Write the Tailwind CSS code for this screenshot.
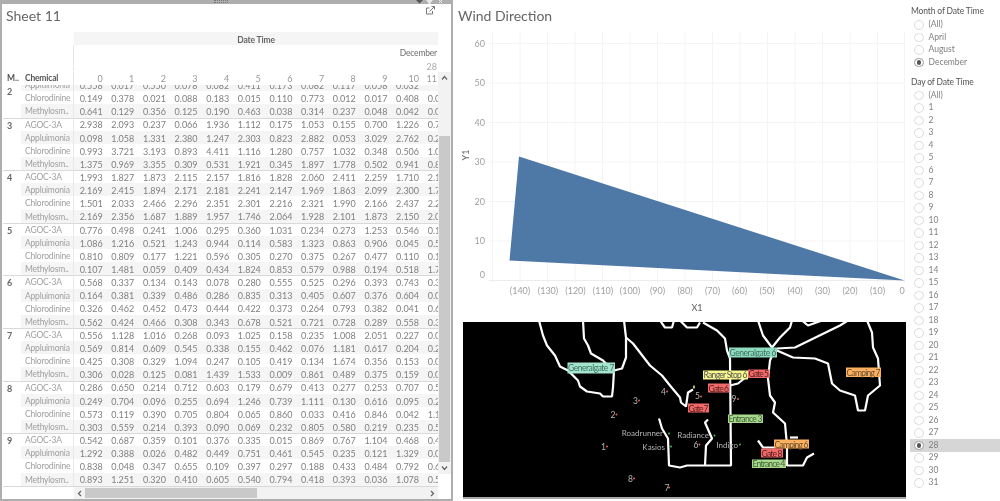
<!DOCTYPE html>
<html>
<head>
<meta charset="utf-8">
<script src="https://cdn.jsdelivr.net/npm/@tailwindcss/browser@4"></script>
</head>
<body class="bg-white overflow-hidden">
<div class="flex w-[1000px] h-[501px] overflow-hidden font-[Lato,sans-serif] text-[9px] text-[#808080] bg-white blur-[0.4px]">

  <!-- Left worksheet -->
  <section class="relative box-border w-[453px] h-[501px] shrink-0 border-t-[4px] border-l-[2px] border-r-[2px] border-b-[2px] border-[#aeaeae] flex flex-col">
    <div class="absolute -top-[4px] left-[212px] w-[14px] h-[3px] border-y border-dotted border-[#777]"></div>
    <svg class="absolute -top-[4px] left-[412px]" width="34" height="4" viewBox="0 0 34 4"><path d="M2 0h7l-3.5 3.5z" fill="#555"/><path d="M12 0h7l-2.5 3v1h-2v-1z" fill="#e8e8e8"/><path d="M25 0l3 3M28 0l-3 3" stroke="#eee"/></svg>
    <div class="flex justify-between h-[28px] shrink-0">
      <h1 class="pl-1 text-[14px] leading-[24px] text-[#666] font-normal">Sheet 11</h1>
      <svg class="mt-[2px] mr-[16px]" width="9" height="9" viewBox="0 0 9 9" fill="none" stroke="#777"><path d="M6.5 5v3h-6V2h3"/><path d="M3.5 5.5L8 1M5.5 .5h3v3"/></svg>
    </div>

    <div class="flex flex-1 min-h-0">
      <div class="w-[436px] shrink-0 flex flex-col">
        <!-- header -->
        <div class="ml-[72px] h-[13px] bg-[#f5f5f5] text-center pt-[2px] leading-[13px] text-[8.5px] tracking-[-0.15px] font-bold text-[#666]">Date Time</div>
        <div class="ml-[71px] h-[13px] pt-[2px] text-right leading-[13px] pr-[1px] text-[8.5px] tracking-[-0.2px] font-medium text-[#777] border-l border-[#e6e6e6]">December</div>
        <div class="ml-[71px] h-[13px] pt-[2px] text-right leading-[13px] pr-[1px] text-[#aaa] border-l border-[#e6e6e6]">28</div>
        <div class="flex h-[13.5px] pt-[2px] items-center text-[#999] [&>span]:w-[31.65px] [&>span]:shrink-0 [&>span]:text-right [&>span]:pr-[3px] overflow-hidden">
          <b class="w-[19px] pl-[5px] text-[#555] text-[8.5px] shrink-0">M..</b>
          <b class="w-[53px] pl-[4px] text-[#555] text-[8.5px] tracking-[-0.2px] shrink-0 border-r border-[#e4e4e4]">Chemical</b>
          <span>0</span><span>1</span><span>2</span><span>3</span><span>4</span><span>5</span><span>6</span><span>7</span><span>8</span><span>9</span><span>10</span><span class="!w-[16px] !pr-[1px]">11</span>
        </div>
        <!-- body -->
        <div class="h-[402.5px] overflow-hidden shrink-0 [&>div]:flex [&>div]:h-[52.6px] [&>div]:ml-px [&>div]:shadow-[0_1px_0_#d9d9d9] [&_h2]:w-[18px] [&_h2]:shrink-0 [&_h2]:pl-[4px] [&_h2]:pt-[2px] [&_h2]:font-bold [&_h2]:text-[#666] [&_h2]:leading-[12px] [&_p]:flex [&_p]:h-[13.15px] [&_p]:items-center [&_p]:whitespace-nowrap [&_p:nth-child(even)]:bg-[#f5f5f5] [&_b]:w-[53px] [&_b]:h-full [&_b]:shrink-0 [&_b]:pl-[4px] [&_b]:font-normal [&_b]:text-[8.5px] [&_b]:tracking-[-0.2px] [&_b]:text-[#a0a0a0] [&_b]:leading-[15.5px] [&_b]:border-r [&_b]:border-[#e8e8e8] [&_span]:w-[31.65px] [&_span]:shrink-0 [&_span]:text-right [&_span]:pr-[3px] [&_span]:pt-[2px]">
          <div class="-mt-[19.5px]"><h2 class="!pt-[21px]">2</h2><section class="w-[418px] overflow-hidden">
            <p><b></b></p>
            <p><b>Appluimonia</b><span>0.558</span><span>0.017</span><span>0.550</span><span>0.078</span><span>0.082</span><span>0.411</span><span>0.173</span><span>0.082</span><span>0.117</span><span>0.058</span><span>0.032</span><span>0.1</span></p>
            <p><b>Chlorodinine</b><span>0.149</span><span>0.378</span><span>0.021</span><span>0.088</span><span>0.183</span><span>0.015</span><span>0.110</span><span>0.773</span><span>0.012</span><span>0.017</span><span>0.408</span><span>0.011</span></p>
            <p><b>Methylosm..</b><span>0.641</span><span>0.129</span><span>0.356</span><span>0.125</span><span>0.190</span><span>0.463</span><span>0.038</span><span>0.314</span><span>0.237</span><span>0.048</span><span>0.042</span><span>0.011</span></p>
          </section></div>
          <div><h2>3</h2><section class="w-[418px] overflow-hidden">
            <p><b>AGOC-3A</b><span>2.938</span><span>2.093</span><span>0.237</span><span>0.066</span><span>1.936</span><span>1.112</span><span>0.175</span><span>1.053</span><span>0.155</span><span>0.700</span><span>1.226</span><span>0.711</span></p>
            <p><b>Appluimonia</b><span>0.098</span><span>1.058</span><span>1.331</span><span>2.380</span><span>1.247</span><span>2.303</span><span>0.823</span><span>2.882</span><span>0.053</span><span>3.029</span><span>2.762</span><span>0.211</span></p>
            <p><b>Chlorodinine</b><span>0.993</span><span>3.721</span><span>3.193</span><span>0.893</span><span>4.411</span><span>1.116</span><span>1.280</span><span>0.757</span><span>1.032</span><span>0.348</span><span>0.506</span><span>1.011</span></p>
            <p><b>Methylosm..</b><span>1.375</span><span>0.969</span><span>3.355</span><span>0.309</span><span>0.531</span><span>1.921</span><span>0.345</span><span>1.897</span><span>1.778</span><span>0.502</span><span>0.941</span><span>0.811</span></p>
          </section></div>
          <div><h2>4</h2><section class="w-[418px] overflow-hidden">
            <p><b>AGOC-3A</b><span>1.993</span><span>1.827</span><span>1.873</span><span>2.115</span><span>2.157</span><span>1.816</span><span>1.828</span><span>2.060</span><span>2.411</span><span>2.259</span><span>1.710</span><span>2.111</span></p>
            <p><b>Appluimonia</b><span>2.169</span><span>2.415</span><span>1.894</span><span>2.171</span><span>2.181</span><span>2.241</span><span>2.147</span><span>1.969</span><span>1.863</span><span>2.099</span><span>2.300</span><span>1.711</span></p>
            <p><b>Chlorodinine</b><span>1.501</span><span>2.033</span><span>2.466</span><span>2.296</span><span>2.351</span><span>2.301</span><span>2.216</span><span>2.321</span><span>1.990</span><span>2.166</span><span>2.437</span><span>2.211</span></p>
            <p><b>Methylosm..</b><span>2.169</span><span>2.356</span><span>1.687</span><span>1.889</span><span>1.957</span><span>1.746</span><span>2.064</span><span>1.928</span><span>2.101</span><span>1.873</span><span>2.150</span><span>2.011</span></p>
          </section></div>
          <div><h2>5</h2><section class="w-[418px] overflow-hidden">
            <p><b>AGOC-3A</b><span>0.776</span><span>0.498</span><span>0.241</span><span>1.006</span><span>0.295</span><span>0.360</span><span>1.031</span><span>0.234</span><span>0.273</span><span>1.253</span><span>0.546</span><span>0.111</span></p>
            <p><b>Appluimonia</b><span>1.086</span><span>1.216</span><span>0.521</span><span>1.243</span><span>0.944</span><span>0.114</span><span>0.583</span><span>1.323</span><span>0.863</span><span>0.906</span><span>0.045</span><span>0.511</span></p>
            <p><b>Chlorodinine</b><span>0.810</span><span>0.809</span><span>0.177</span><span>1.221</span><span>0.596</span><span>0.305</span><span>0.270</span><span>0.375</span><span>0.267</span><span>0.477</span><span>0.110</span><span>0.111</span></p>
            <p><b>Methylosm..</b><span>0.107</span><span>1.481</span><span>0.059</span><span>0.409</span><span>0.434</span><span>1.824</span><span>0.853</span><span>0.579</span><span>0.988</span><span>0.194</span><span>0.518</span><span>1.711</span></p>
          </section></div>
          <div><h2>6</h2><section class="w-[418px] overflow-hidden">
            <p><b>AGOC-3A</b><span>0.568</span><span>0.337</span><span>0.134</span><span>0.143</span><span>0.078</span><span>0.280</span><span>0.555</span><span>0.525</span><span>0.296</span><span>0.393</span><span>0.743</span><span>0.311</span></p>
            <p><b>Appluimonia</b><span>0.164</span><span>0.381</span><span>0.339</span><span>0.486</span><span>0.286</span><span>0.835</span><span>0.313</span><span>0.405</span><span>0.607</span><span>0.376</span><span>0.604</span><span>0.011</span></p>
            <p><b>Chlorodinine</b><span>0.326</span><span>0.462</span><span>0.452</span><span>0.473</span><span>0.444</span><span>0.422</span><span>0.373</span><span>0.264</span><span>0.793</span><span>0.382</span><span>0.041</span><span>0.611</span></p>
            <p><b>Methylosm..</b><span>0.562</span><span>0.424</span><span>0.466</span><span>0.308</span><span>0.343</span><span>0.678</span><span>0.521</span><span>0.721</span><span>0.728</span><span>0.289</span><span>0.558</span><span>0.311</span></p>
          </section></div>
          <div><h2>7</h2><section class="w-[418px] overflow-hidden">
            <p><b>AGOC-3A</b><span>0.556</span><span>1.128</span><span>1.016</span><span>0.268</span><span>0.093</span><span>1.025</span><span>0.158</span><span>0.235</span><span>1.008</span><span>2.051</span><span>0.227</span><span>0.011</span></p>
            <p><b>Appluimonia</b><span>0.569</span><span>0.814</span><span>0.609</span><span>0.545</span><span>0.338</span><span>0.155</span><span>0.462</span><span>0.076</span><span>1.181</span><span>0.617</span><span>0.204</span><span>0.211</span></p>
            <p><b>Chlorodinine</b><span>0.425</span><span>0.308</span><span>0.329</span><span>1.094</span><span>0.247</span><span>0.105</span><span>0.419</span><span>0.134</span><span>1.674</span><span>0.356</span><span>0.153</span><span>0.011</span></p>
            <p><b>Methylosm..</b><span>0.306</span><span>0.028</span><span>0.125</span><span>0.081</span><span>1.439</span><span>1.533</span><span>0.009</span><span>0.861</span><span>0.489</span><span>0.375</span><span>0.159</span><span>0.011</span></p>
          </section></div>
          <div><h2>8</h2><section class="w-[418px] overflow-hidden">
            <p><b>AGOC-3A</b><span>0.286</span><span>0.650</span><span>0.214</span><span>0.712</span><span>0.603</span><span>0.179</span><span>0.679</span><span>0.413</span><span>0.277</span><span>0.253</span><span>0.707</span><span>0.511</span></p>
            <p><b>Appluimonia</b><span>0.249</span><span>0.704</span><span>0.096</span><span>0.255</span><span>0.694</span><span>1.246</span><span>0.739</span><span>1.111</span><span>0.130</span><span>0.616</span><span>0.095</span><span>0.211</span></p>
            <p><b>Chlorodinine</b><span>0.573</span><span>0.119</span><span>0.390</span><span>0.705</span><span>0.804</span><span>0.065</span><span>0.860</span><span>0.033</span><span>0.416</span><span>0.846</span><span>0.042</span><span>1.111</span></p>
            <p><b>Methylosm..</b><span>0.303</span><span>0.559</span><span>0.214</span><span>0.393</span><span>0.090</span><span>0.069</span><span>0.232</span><span>0.805</span><span>0.580</span><span>0.219</span><span>0.235</span><span>0.511</span></p>
          </section></div>
          <div><h2>9</h2><section class="w-[418px] overflow-hidden">
            <p><b>AGOC-3A</b><span>0.542</span><span>0.687</span><span>0.359</span><span>0.101</span><span>0.376</span><span>0.335</span><span>0.015</span><span>0.869</span><span>0.767</span><span>1.104</span><span>0.468</span><span>0.411</span></p>
            <p><b>Appluimonia</b><span>1.292</span><span>0.388</span><span>0.026</span><span>0.482</span><span>0.449</span><span>0.751</span><span>0.461</span><span>0.545</span><span>0.235</span><span>0.121</span><span>1.329</span><span>0.011</span></p>
            <p><b>Chlorodinine</b><span>0.838</span><span>0.048</span><span>0.347</span><span>0.655</span><span>0.109</span><span>0.397</span><span>0.297</span><span>0.188</span><span>0.433</span><span>0.484</span><span>0.792</span><span>0.611</span></p>
            <p><b>Methylosm..</b><span>0.893</span><span>1.251</span><span>0.320</span><span>0.410</span><span>0.605</span><span>0.540</span><span>0.794</span><span>0.418</span><span>0.393</span><span>0.036</span><span>1.078</span><span>0.511</span></p>
          </section></div>
        </div>
      </div>
      <!-- vertical scrollbar -->
      <div class="w-[13px] shrink-0 mt-[39.5px] flex flex-col items-center h-[402.5px] bg-[#f2f2f2]">
        <svg class="my-[3px] shrink-0" width="7" height="6" viewBox="0 0 7 6" fill="none" stroke="#666" stroke-width="1.3"><path d="M1 4.5l2.5-3 2.5 3"/></svg>
        <div class="w-full flex-1 relative"></div>
        <div class="w-[11px] h-[326px] bg-[#c9c9c9]"></div>
        <svg class="my-[3px] shrink-0" width="7" height="6" viewBox="0 0 7 6" fill="none" stroke="#666" stroke-width="1.3"><path d="M1 1.5l2.5 3 2.5-3"/></svg>
      </div>
    </div>
    <!-- horizontal scrollbar -->
    <div class="h-[12px] flex items-center shrink-0 mt-auto">
      <div class="w-[72px] shrink-0"></div>
      <div class="flex items-center w-[364px] h-full bg-[#f2f2f2]">
        <svg class="mx-[3px] shrink-0" width="5" height="7" viewBox="0 0 5 7" fill="none" stroke="#666" stroke-width="1.3"><path d="M4 1L1.500 3.500 4 6"/></svg>
        <div class="w-[172px] h-[10px] bg-[#c9c9c9]"></div>
        <div class="flex-1"></div>
        <svg class="mx-[3px] shrink-0" width="5" height="7" viewBox="0 0 5 7" fill="none" stroke="#666" stroke-width="1.3"><path d="M1 1l2.500 2.500L1 6"/></svg>
      </div>
    </div>
  </section>

  <!-- Middle -->
  <main class="w-[457px] shrink-0 flex flex-col">
    <h1 class="h-[32px] pl-[5px] pt-[6px] text-[14px] leading-[20px] text-[#666] font-normal shrink-0">Wind Direction</h1>
    <svg class="shrink-0" width="457" height="289.500" viewBox="453 32 457 289.500" font-size="9" fill="#a0a0a0" font-family="Lato,sans-serif">
      <g stroke="#f4f4f4" fill="none">
        <path d="M489 43.500H905M489 83H905M489 122.500H905M489 162H905M489 201.500H905M489 241H905"/>
        <path d="M492.500 32V283M520 32V283M547.500 32V283M575 32V283M602.500 32V283M630 32V283M657.500 32V283M685 32V283M712.500 32V283M740 32V283M767.500 32V283M795 32V283M822.500 32V283M850 32V283M877.500 32V283M904.500 32V283"/>
        <path d="M489 280.500H905" stroke="#ececec"/>
      </g>
      <polygon points="519,156.500 509.500,260.500 904.500,280.500" fill="#4e79a7"/>
      <g text-anchor="end">
        <text x="485" y="46.500">60</text><text x="485" y="86">50</text><text x="485" y="125.500">40</text><text x="485" y="165">30</text><text x="485" y="204.500">20</text><text x="485" y="244">10</text><text x="485" y="278">0</text>
      </g>
      <g text-anchor="middle">
        <text x="520" y="294">(140)</text><text x="548" y="294">(130)</text><text x="575.500" y="294">(120)</text><text x="603" y="294">(110)</text><text x="630" y="294">(100)</text><text x="657.500" y="294">(90)</text><text x="685" y="294">(80)</text><text x="712.500" y="294">(70)</text><text x="739.500" y="294">(60)</text><text x="767" y="294">(50)</text><text x="795" y="294">(40)</text><text x="822.500" y="294">(30)</text><text x="850" y="294">(20)</text><text x="877.500" y="294">(10)</text><text x="902" y="294">0</text>
        <text x="697" y="310.500" fill="#666" font-weight="500">X1</text>
        <text transform="translate(469,155) rotate(-90)" fill="#666" font-weight="500">Y1</text>
      </g>
    </svg>
    <svg class="ml-[10px] shrink-0" width="443" height="175" viewBox="463 321.500 443 175" font-family="Lato,sans-serif" font-size="8.500">
      <rect x="463" y="321.500" width="443" height="175" fill="#000"/>
      <g fill="none" stroke="#fff" stroke-width="2.200" stroke-linejoin="bevel">
        <path d="M539 320L543 335L547 345L555 355L560 366L568 370L578 380L580 386L587 391L600 393L603 396L612 396L613 387L614 370L622 368L626 357L626 337L624 320"/>
        <path d="M583 320L584 338L588 345L591 353L603 360L608 365L614 370"/>
        <path d="M626 337L633 343L650 365L662 375L670 385L680 397L681 402L686 406L688 392L693 389"/>
        <path d="M660 320L665 327L672 327L674 320"/>
        <path d="M680 320L687 327L697 327L700 322"/>
        <path d="M703 322L717 330L725 338L727 350L730 358L731 465L705 465L687 465L680 467L669 465L668 438L662 428L659 418"/>
        <path d="M705 465L706 445L712 438L705 422L708 419"/>
        <path d="M758 320L763 335L772 347L780 337L790 327L792 320"/>
        <path d="M775 348L770 360L768 378L770 395L775 402L773 412L785 423L787 445L787 465L803 465L807 457L814 453"/>
        <path d="M777 350L793 357L815 358L828 363L832 383L840 390L855 395L858 410L865 410L868 395L880 385L878 358L873 347L872 332L867 320"/>
        <path d="M777 348L795 347L840 325L848 320"/>
        <path d="M802 320L808 325L822 320"/>
        <path d="M730 385L738 383L748 375"/>
        <path d="M758 440L763 447L775 447"/>
        <path d="M790 437L798 437"/>
      </g>
      <path d="M694 385v3" stroke="#f5f586" stroke-width="1.500"/>
      <g>
        <rect x="567.500" y="362" width="47.500" height="11" fill="#a3e6cd"/><text x="568" y="370.500" fill="#3f6f60" textLength="46.500">Generalgate 7</text>
        <rect x="729" y="347" width="48" height="10" fill="#8fdcc0"/><text x="729.500" y="355" fill="#3f6f60" textLength="47">Generalgate 6</text>
        <rect x="703" y="370" width="45" height="9" fill="#f7f78e"/><text x="703.500" y="377.700" fill="#555" textLength="44">Ranger Stop 6</text>
        <rect x="748" y="369" width="21.500" height="8.500" fill="#f26a6a"/><text x="748.500" y="376.500" fill="#5a2020" textLength="20.500">Gate 5</text>
        <rect x="708" y="383" width="21.500" height="9" fill="#f26a6a"/><text x="708.500" y="391" fill="#5a2020" textLength="20.500">Gate 6</text>
        <rect x="688" y="403" width="21" height="9" fill="#f26a6a"/><text x="688.500" y="411" fill="#5a2020" textLength="20">Gate 7</text>
        <rect x="846" y="367" width="35" height="9.500" fill="#fdb060"/><text x="846.500" y="375" fill="#66502f" textLength="34">Camping 7</text>
        <rect x="728" y="414" width="35" height="8.500" fill="#a9d98f"/><text x="728.500" y="421.500" fill="#3f6030" textLength="34">Entrance 3</text>
        <rect x="774" y="439" width="35" height="9" fill="#fdb060"/><text x="774.500" y="447" fill="#66502f" textLength="34">Camping 6</text>
        <rect x="761" y="448" width="22" height="9" fill="#f26a6a"/><text x="761.500" y="456" fill="#5a2020" textLength="21">Gate 8</text>
        <rect x="752" y="459" width="34" height="8.500" fill="#a9d98f"/><text x="752.500" y="466.500" fill="#3f6030" textLength="33">Entrance 4</text>
      </g>
      <g fill="#b5b5b5" text-anchor="end">
        <text x="606" y="449">1</text><text x="615.500" y="417">2</text><text x="638" y="403">3</text><text x="666" y="394">4</text><text x="700" y="398">5</text><text x="698.500" y="447">6</text><text x="669.500" y="490">7</text><text x="633" y="481">8</text><text x="736.500" y="401">9</text>
        <text x="663" y="435" font-size="8">Roadrunner</text><text x="665" y="449" font-size="8">Kasios</text><text x="709" y="437" font-size="8">Radiance</text><text x="738" y="447" font-size="8">Indigo</text>
      </g>
      <g fill="#e06060">
        <circle cx="607" cy="446" r="1"/><circle cx="616.500" cy="414" r="1"/><circle cx="639" cy="400" r="1"/><circle cx="667" cy="391" r="1"/><circle cx="701" cy="396" r="1"/><circle cx="699.500" cy="444" r="1"/><circle cx="669" cy="487" r="1"/><circle cx="634" cy="478" r="1"/><circle cx="738" cy="398.500" r="1"/>
      </g>
      <g fill="#3fc24a">
        <circle cx="669" cy="433" r="1"/><circle cx="671" cy="446" r="1"/><circle cx="714.500" cy="435" r="1"/><circle cx="740" cy="444" r="1"/>
      </g>
    </svg>
    <div class="ml-[10px] w-[443px] h-[2px] bg-[#a8a8a8] shrink-0"></div>
  </main>

  <!-- Filters -->
  <aside class="flex-1 text-[#808080] text-[8.5px] [&_li]:flex [&_li]:items-center [&_li]:h-[12.500px] [&_li]:pl-[4px] [&_li>span]:w-[9.500px] [&_li>span]:h-[9.500px] [&_li>span]:rounded-full [&_li>span]:border [&_li>span]:border-[#dcdcdc] [&_li>span]:mr-[5px] [&_li>span]:flex [&_li>span]:items-center [&_li>span]:justify-center [&_li>span]:shrink-0">
    <h3 class="h-[18.500px] pl-px pt-[5px] leading-[12px] text-[#555] font-normal tracking-[-0.15px]">Month of Date Time</h3>
    <ul>
      <li><span></span>(All)</li>
      <li><span></span>April</li>
      <li><span></span>August</li>
      <li><span class="!border-[#999]"><i class="w-[4.500px] h-[4.500px] rounded-full bg-[#555]"></i></span>December</li>
    </ul>
    <h3 class="h-[20.500px] pl-px pt-[7px] leading-[12px] text-[#555] font-normal tracking-[-0.15px]">Day of Date Time</h3>
    <ul>
      <li><span></span>(All)</li>
      <li><span></span>1</li><li><span></span>2</li><li><span></span>3</li><li><span></span>4</li><li><span></span>5</li><li><span></span>6</li><li><span></span>7</li><li><span></span>8</li><li><span></span>9</li><li><span></span>10</li>
      <li><span></span>11</li><li><span></span>12</li><li><span></span>13</li><li><span></span>14</li><li><span></span>15</li><li><span></span>16</li><li><span></span>17</li><li><span></span>18</li><li><span></span>19</li><li><span></span>20</li>
      <li><span></span>21</li><li><span></span>22</li><li><span></span>23</li><li><span></span>24</li><li><span></span>25</li><li><span></span>26</li><li><span></span>27</li>
      <li class="bg-[#d6d6d6]"><span class="!border-[#999] bg-white"><i class="w-[4.500px] h-[4.500px] rounded-full bg-[#555]"></i></span>28</li>
      <li><span></span>29</li><li><span></span>30</li><li><span></span>31</li>
    </ul>
  </aside>
</div>
</body>
</html>
